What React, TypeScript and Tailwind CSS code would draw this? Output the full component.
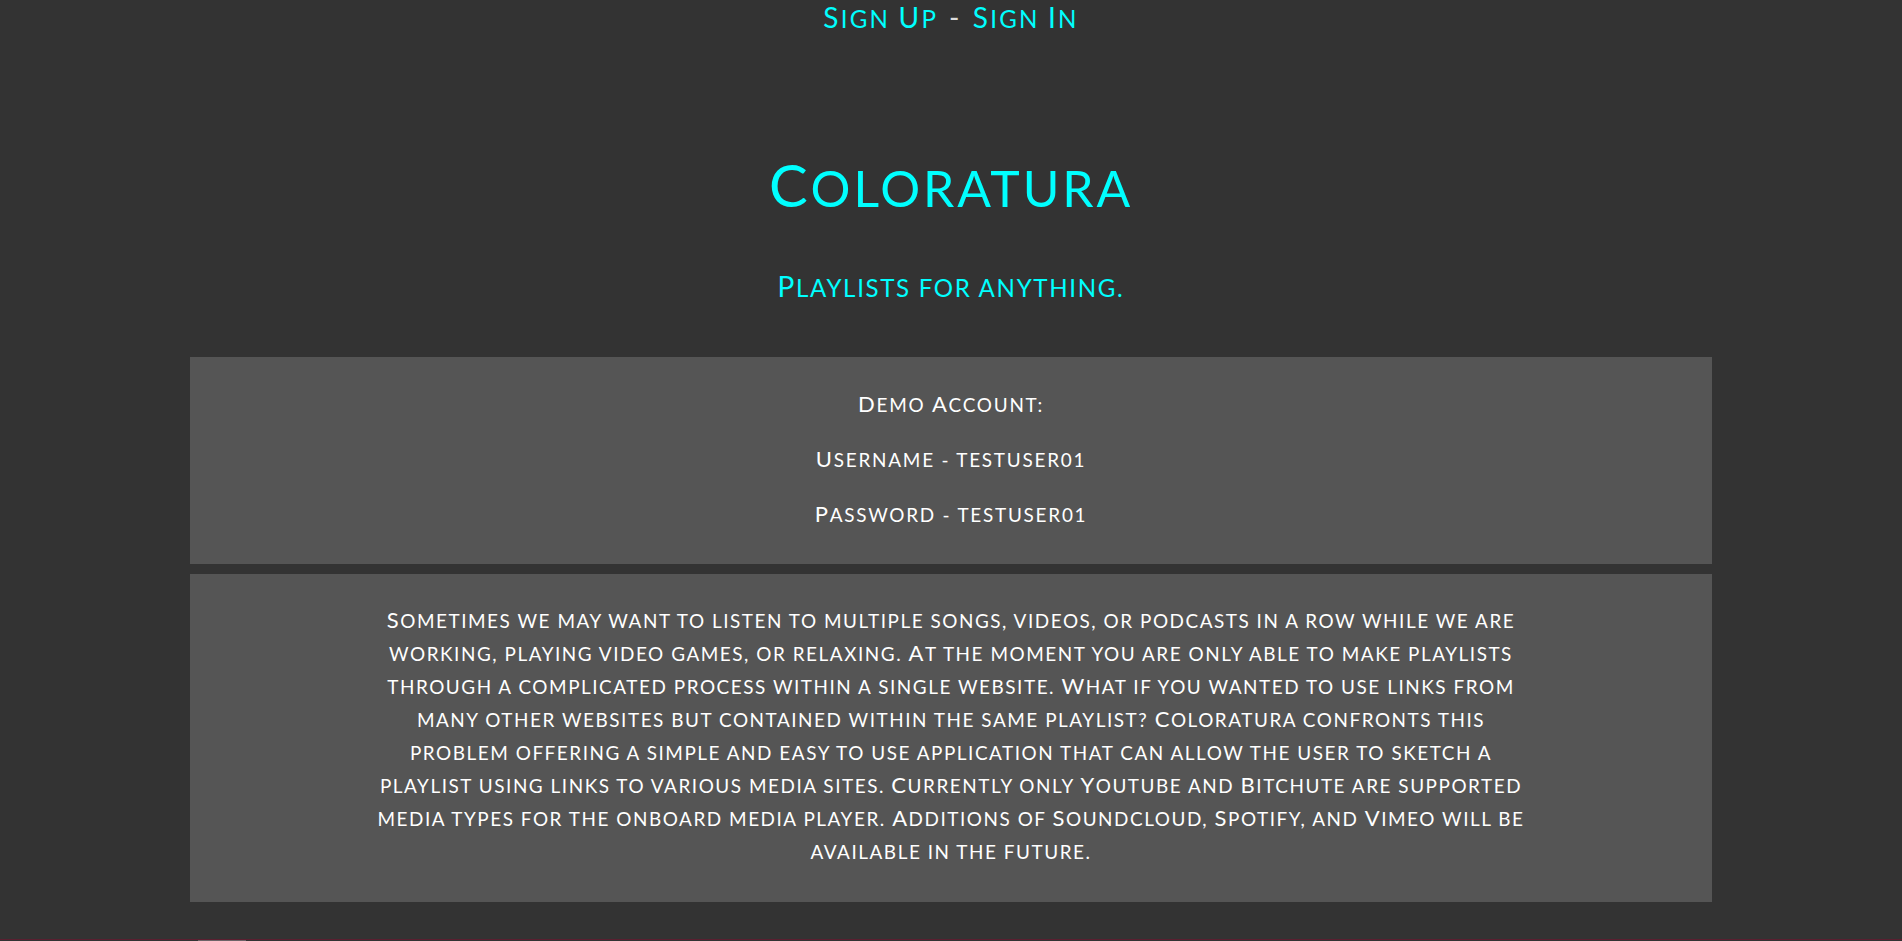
import React from 'react';

// renders lowercase letters as smaller capitals, like the site's small-caps face
const SmallCaps = ({ text }: { text: string }) => {
  const parts = text.split(/([a-z0-9.,:?\-' ]+)/).filter(Boolean);
  return (
    <>
      {parts.map((part, i) =>
        /[a-z]/.test(part) ? (
          <span key={i} className="uppercase text-[0.86em] leading-none">
            {part}
          </span>
        ) : (
          <span key={i}>{part}</span>
        )
      )}
    </>
  );
};

const App = () => {
  const about =
    "Sometimes we may want to listen to multiple songs, videos, or podcasts in a row while we are working, playing video games, or relaxing. At the moment you are only able to make playlists through a complicated process within a single website. What if you wanted to use links from many other websites but contained within the same playlist? Coloratura confronts this problem offering a simple and easy to use application that can allow the user to sketch a playlist using links to various media sites. Currently only Youtube and Bitchute are supported media types for the onboard media player. Additions of Soundcloud, Spotify, and Vimeo will be available in the future.";

  return (
    <div className="min-h-screen bg-[#333333] font-['Lato',sans-serif] text-white">
      {/* Nav */}
      <nav className="flex justify-center items-center h-[34px] leading-[34px] text-[28px] tracking-[0.08em]">
        <a href="#" className="text-[#00ffff]">
          <SmallCaps text="Sign Up" />
        </a>
        <span className="mx-[11px] text-[#dddddd]">-</span>
        <a href="#" className="text-[#00ffff]">
          <SmallCaps text="Sign In" />
        </a>
      </nav>

      {/* Hero */}
      <header className="text-center text-[#00ffff]">
        <h1 className="mt-[116px] text-[58px] leading-[1.2] tracking-[0.05em]">
          <SmallCaps text="Coloratura" />
        </h1>
        <h2 className="mt-[50px] text-[28px] leading-[1.2] tracking-[0.06em]">
          <SmallCaps text="Playlists for anything." />
        </h2>
      </header>

      {/* Demo account */}
      <section className="mt-[54px] mx-auto w-[80%] bg-[#555555] pt-[30px] pb-[34px] flex flex-col gap-[22px] items-center text-[22px] leading-[33px] tracking-[0.08em]">
        <p>
          <SmallCaps text="Demo Account:" />
        </p>
        <p>
          <SmallCaps text="Username - testuser01" />
        </p>
        <p>
          <SmallCaps text="Password - testuser01" />
        </p>
      </section>

      {/* About */}
      <section className="mt-[10px] mx-auto w-[80%] bg-[#555555] pt-[29px] pb-[35px]">
        <p className="mx-auto max-w-[1150px] text-center text-[22px] leading-[33px] tracking-[0.07em]">
          <SmallCaps text={about} />
        </p>
      </section>

      {/* Below the fold */}
      <div className="mt-[37px] border-t border-[#5a1f30] h-[60px]">
        <div className="ml-[198px] w-[48px] h-[20px] bg-[#6e6468]" />
      </div>
    </div>
  );
};

export default App;
